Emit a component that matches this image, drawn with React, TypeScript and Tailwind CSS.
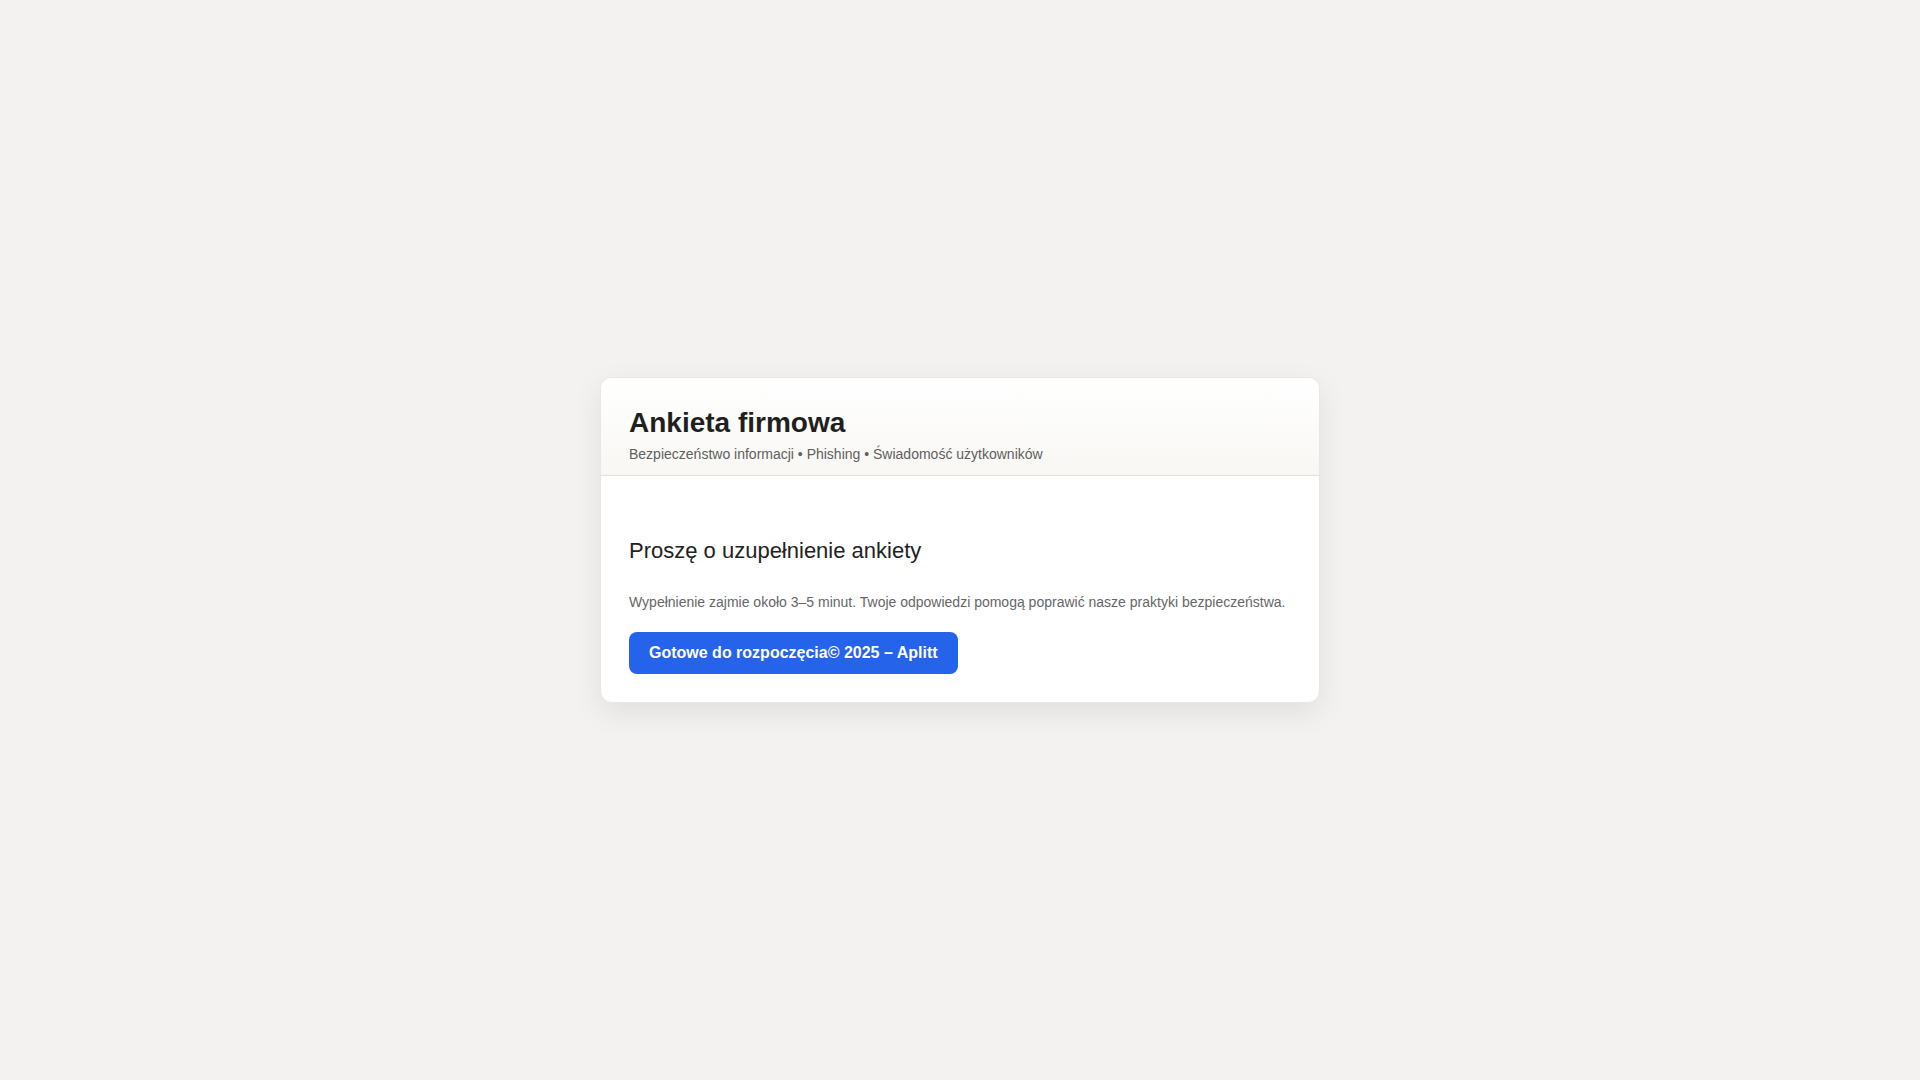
export default function App() {
  return (
    <main className="min-h-screen w-full bg-[#f3f2f0] flex items-center justify-center font-['Liberation_Sans',Arial,sans-serif]">
      <div className="w-[720px] rounded-xl bg-white border border-[#e9e7e3] shadow-[0_10px_30px_rgba(0,0,0,0.08)] overflow-hidden">
        {/* header */}
        <header className="px-7 pt-7 pb-[11px] bg-gradient-to-b from-white to-[#f8f7f4] border-b border-[#e3e1dd]">
          <h1 className="text-[28px] leading-[1.2] font-bold text-[#1f1f1f]">Ankieta firmowa</h1>
          <p className="mt-1 text-[14px] leading-5 text-[#5f5f5f]">
            Bezpieczeństwo informacji • Phishing • Świadomość użytkowników
          </p>
        </header>

        <section className="px-7 pt-[61px] pb-7">
          <h2 className="text-[22px] leading-[1.3] font-normal text-[#222]">Proszę o uzupełnienie ankiety</h2>
          <p className="mt-[26px] text-[14px] leading-5 text-[#666]">
            Wypełnienie zajmie około 3–5 minut. Twoje odpowiedzi pomogą poprawić nasze praktyki bezpieczeństwa.
          </p>
          <button className="mt-5 px-5 py-[11px] rounded-lg bg-[#2563eb] text-white text-[16px] leading-5 font-bold">
            Gotowe do rozpoczęcia© 2025 – Aplitt
          </button>
        </section>
      </div>
    </main>
  );
}
